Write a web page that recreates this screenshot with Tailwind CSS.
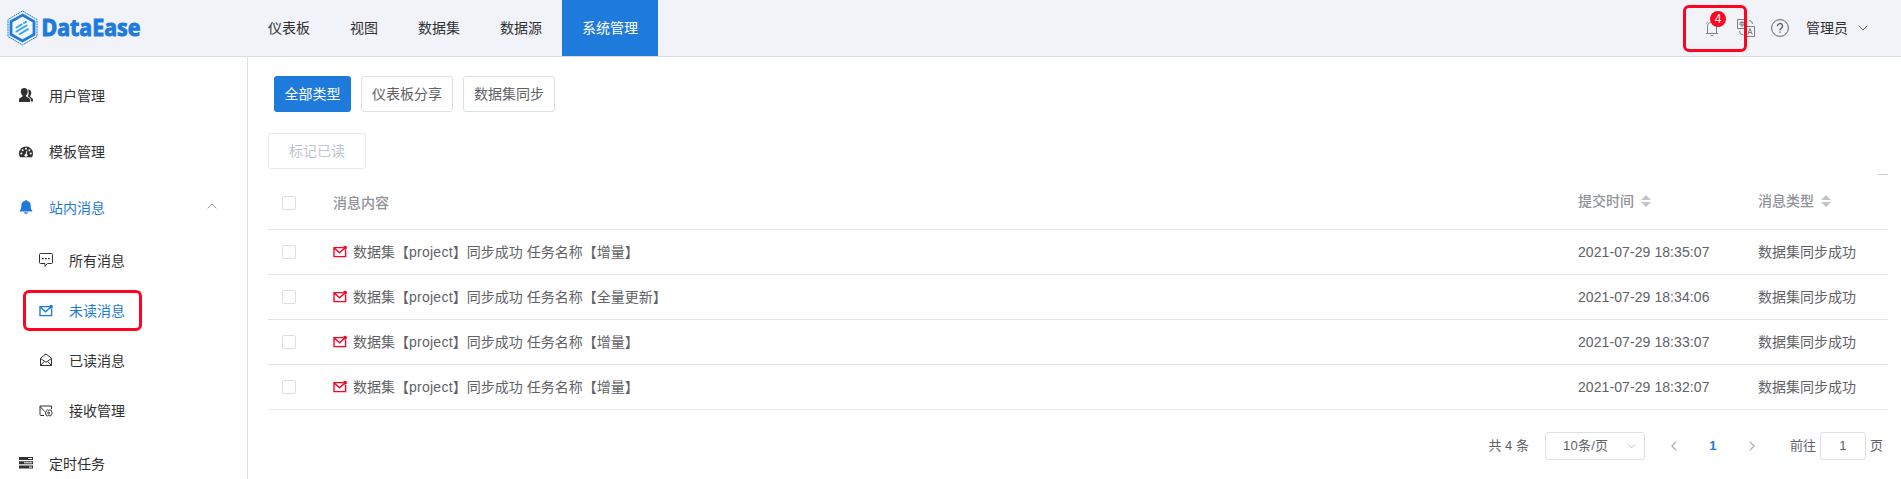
<!DOCTYPE html>
<html lang="zh">
<head>
<meta charset="utf-8">
<title>DataEase</title>
<script src="https://cdn.jsdelivr.net/npm/@tailwindcss/browser@4"></script>
</head>
<body class="h-[479px] w-[1901px] overflow-hidden bg-white font-['Liberation_Sans','Noto_Sans_CJK_SC',sans-serif] text-sm text-[#606266]">
<svg class="hidden">
  <symbol id="unread" viewBox="0 0 14 14"><path d="M10 2.600H1v9h11.600V5M1.200 3l5.400 4.800L11 3.800" fill="none" stroke="currentColor" stroke-width="1.400"/><circle cx="12" cy="2.800" r="2" fill="currentColor"/></symbol>
  <symbol id="sort" viewBox="0 0 10 12"><path d="M0 5 5 0l5 5zM0 7h10l-5 5z" fill="#c0c4cc"/></symbol>
</svg>
<header class="relative flex h-[57px] items-center border-b border-[#d8dce8] bg-[#f1f3f8] text-[#303133]">
  <div class="flex w-[248px] items-center pl-[7px]">
    <svg class="h-[40px] w-[140px] overflow-visible" viewBox="0 -2 140 40">
      <path d="M15.500 1 30 9.500v17L15.500 35 1 26.500v-17z" fill="none" stroke="#1f7bdb" stroke-width="1" stroke-dasharray="2 .6"/>
      <path d="M15.500 5 27 11.500v13L15.500 31 4 24.500v-13z" fill="#f4f8fd" stroke="#1f7bdb" stroke-width="2.800"/>
      <path d="m9.500 17.500 5-3M17 13l2-1.200M9.500 21.500l10-6M13 24l8-4.800" stroke="#35a5ee" stroke-width="2" stroke-linecap="round"/>
      <text x="34.500" y="26" textLength="99" lengthAdjust="spacingAndGlyphs" fill="#1f7bdb" stroke="#1f7bdb" stroke-width="1" class="font-['Noto_Sans'] text-[23px] font-bold">DataEase</text>
    </svg>
  </div>
  <nav class="flex h-full flex-1">
    <a class="flex items-center px-5">仪表板</a><a class="flex items-center px-5">视图</a><a class="flex items-center px-5">数据集</a><a class="flex items-center px-5">数据源</a><a class="flex items-center bg-[#1f7bdb] px-5 text-white">系统管理</a>
  </nav>
  <div class="flex items-center pr-[33px]">
    <div class="relative mr-[18px] h-[18px] w-[14px]">
      <svg class="size-full" viewBox="0 0 14 18" fill="none" stroke="#7d7f84"><path d="M2.500 14.500V7.500a4.500 4.500 0 0 1 9 0v7M1 14.500h12M5.500 16.500h3M1 4.500l1.500-1.300"/></svg>
      <span class="absolute -top-[8px] left-[5px] flex size-4 items-center justify-center rounded-full bg-[#ff0420] text-xs text-white">4</span>
    </div>
    <svg class="mr-[16px] size-[18px]" viewBox="0 0 18 18" fill="none" stroke="#7d7f84"><path d="M8.500 9.500H.5v-9h9v6M8.500 7.500h9v10h-9zM3 3.500h4v2.500H3zM5 2v6M10.800 15.500l2.200-6 2.200 6M11.500 13.500h3M12 1.500q3.500 0 3.500 3.500M2.500 12q0 4 4 4"/></svg>
    <svg class="mr-[17px] size-[18px]" viewBox="0 0 18 18" fill="none" stroke="#606266"><circle cx="9" cy="9" r="8.400"/><path d="M6.500 7.200a2.500 2.500 0 1 1 3.600 2.100q-1.100.6-1.100 1.900M9 12.500v1.300" stroke-width="1.400"/></svg>
    <span>管理员</span>
    <svg class="ml-[10px] h-[6px] w-[10px]" viewBox="0 0 10 6" fill="none" stroke="#606266"><path d="m.7.700 4.300 4.300L9.300.7"/></svg>
  </div>
  <div class="absolute left-[1683px] top-[5px] h-[47px] w-[64px] rounded-[6px] border-3 border-[#ff0420]"></div>
</header>
<div class="flex h-[422px]">
  <aside class="w-[248px] shrink-0 border-r border-[#e0e2e6] pt-[11px] text-[#303133]">
    <div class="flex h-14 items-center gap-4 pl-[19px]">
      <svg class="-mt-[2px] size-[14px]" viewBox="0 0 14 14" fill="currentColor"><path d="M5.200 0C7.400 0 8.700 1.400 8.700 3.600c0 1.700-.7 3-1.600 3.800v1l2.900 1.500q1 .6 1 1.700V14H0v-2.400q0-1.100.8-1.600l2.700-1.600v-1C2.500 6.700 1.800 5.300 1.800 3.600 1.800 1.400 3.100 0 5.200 0z"/><path d="M9.200 1.600c2 0 3.100 1.300 3.100 3.200 0 1.300-.4 2.300-1.100 3v1l2 1.500q.8.600.8 1.600V13.500h-2.200v-2q0-1.200-1-1.800L8.900 8.500q1.500-3.400.3-6.900z"/></svg><span>用户管理</span></div>
    <div class="flex h-14 items-center gap-4 pl-[19px]">
      <svg class="size-[14px]" viewBox="0 0 14 14"><path d="M7 1.500a7 7 0 0 1 7 7q0 2-1 3.800H1Q0 10.500 0 8.500a7 7 0 0 1 7-7z" fill="currentColor"/><g fill="#fff"><circle cx="2.300" cy="8.600" r="1"/><circle cx="3.700" cy="5.200" r="1"/><circle cx="7" cy="3.800" r="1"/><circle cx="10.400" cy="5.200" r="1"/><circle cx="11.700" cy="8.600" r="1"/></g><path d="m7 10 1-4.200" stroke="#fff"/><circle cx="7" cy="10.200" r="1.500" fill="#fff"/></svg><span>模板管理</span></div>
    <div class="flex h-14 items-center gap-4 pl-[19px] text-[#1f7bdb]">
      <svg class="-mt-[2px] size-[14px]" viewBox="0 0 14 14" fill="currentColor"><path d="M7 0q1 0 1.100 1C10.500 1.500 11.700 3.200 11.700 5.500c0 3 .3 4.200 1.600 5v1.100H.7v-1.100c1.300-.8 1.600-2 1.600-5C2.300 3.200 3.500 1.500 5.900 1Q6 0 7 0zM5 12.300h4Q8.700 14 7 14t-2-1.700z"/></svg><span>站内消息</span>
      <svg class="-mt-1 ml-auto mr-[30px] h-[6px] w-[10px]" viewBox="0 0 10 6" fill="none" stroke="#909399"><path d="M.7 5.300 5 1l4.300 4.300"/></svg></div>
    <div class="flex h-[50px] items-center gap-4 pl-[39px]">
      <svg class="-mt-[2px] size-[14px] overflow-visible" viewBox="0 0 14 14" fill="none" stroke="currentColor"><path d="M1.500.5h11q1 0 1 1v8q0 1-1 1H8.500L6 13.300V10.500H1.500q-1 0-1-1v-8q0-1 1-1z"/><path d="M3 5.700h8" stroke-dasharray="1.800 1.200" stroke-width="1.300"/></svg><span>所有消息</span></div>
    <div class="relative flex h-[50px] items-center gap-4 pl-[39px] text-[#1f7bdb]">
      <svg class="-mt-px size-[14px]"><use href="#unread"/></svg><span>未读消息</span>
      <div class="absolute left-[23px] top-[4px] h-[41px] w-[119px] rounded-[6px] border-3 border-[#ff0420]"></div></div>
    <div class="flex h-[50px] items-center gap-4 pl-[39px]">
      <svg class="-mt-[2px] size-[14px]" viewBox="0 0 14 14" fill="none" stroke="currentColor"><path d="M1.500 5.200 7 1l5.500 4.200v7.300h-11zM1.500 5.500 7 9.300l5.500-3.800M1.500 12.500l4-4.200M12.500 12.500l-4-4.200"/></svg><span>已读消息</span></div>
    <div class="flex h-[50px] items-center gap-4 pl-[39px]">
      <svg class="-mt-px size-[14px]" viewBox="0 0 14 14" fill="none" stroke="currentColor"><path d="M5 11.500H2q-1 0-1-1V2h11.500v3M1.200 2.500l4.500 5"/><path d="m7.600 6.500.9-.7 1.200.6 1.200-.6 1.700 1-.1 1.300 1 .8-1 .9.100 1.200-1.700 1-1.200-.7-1.200.7-1.600-1 .1-1.200-1-.9 1-.9z"/><circle cx="9.700" cy="9" r="1"/></svg><span>接收管理</span></div>
    <div class="flex h-14 items-center gap-4 pl-[19px]">
      <svg class="-mt-[2px] size-[14px]" viewBox="0 0 14 14" fill="currentColor"><path d="M0 1h14v3H0zM0 5.300h14v3H0zM0 9.600h14v3H0z"/><path d="M9 2.500h4M5 6.800h8M10 11.100h3" stroke="#fff"/></svg><span>定时任务</span></div>
  </aside>
  <main class="flex-1 pl-5 pr-[13px] pt-[19px]">
    <div class="flex gap-[10px] pl-[6px]">
      <button class="h-9 w-[77px] rounded-[3px] bg-[#1f7bdb] text-white">全部类型</button>
      <button class="h-9 w-[92px] rounded-[3px] border border-[#dcdfe6]">仪表板分享</button>
      <button class="h-9 w-[92px] rounded-[3px] border border-[#dcdfe6]">数据集同步</button>
    </div>
    <button class="mt-[21px] block h-9 w-[98px] rounded-[3px] border border-[#e6eaf4] text-[#c0c4cc]">标记已读</button>
    <div class="mt-[5px] ml-auto h-px w-[10px] bg-[#c8cacd]"></div>
    <div class="grid h-[55px] grid-cols-[65px_1245px_180px_130px] items-center border-b border-[#dfe6ec] font-medium text-[#909399]">
      <span class="mt-[2px] ml-[14px] size-[14px] rounded-[2px] border border-[#dcdfe6]"></span><span class="mt-[2px]">消息内容</span>
      <span class="-mt-[2px] flex items-center gap-[7px]">提交时间<svg class="h-3 w-[10px]"><use href="#sort"/></svg></span>
      <span class="-mt-[2px] flex items-center gap-[7px]">消息类型<svg class="h-3 w-[10px]"><use href="#sort"/></svg></span>
    </div>
    <div class="grid h-[45px] grid-cols-[65px_1245px_180px_130px] items-center border-b border-[#dfe6ec]">
      <span class="ml-[14px] size-[14px] rounded-[2px] border border-[#dcdfe6]"></span><span class="flex items-center gap-[6px]"><svg class="size-[14px] text-[#ff0420]"><use href="#unread"/></svg><span>数据集【<span class="tracking-[.25px]">project</span>】同步成功 任务名称【增量】</span></span><span class="tracking-[.08px]">2021-07-29 18:35:07</span><span>数据集同步成功</span>
    </div>
    <div class="grid h-[45px] grid-cols-[65px_1245px_180px_130px] items-center border-b border-[#dfe6ec]">
      <span class="ml-[14px] size-[14px] rounded-[2px] border border-[#dcdfe6]"></span><span class="flex items-center gap-[6px]"><svg class="size-[14px] text-[#ff0420]"><use href="#unread"/></svg><span>数据集【<span class="tracking-[.25px]">project</span>】同步成功 任务名称【全量更新】</span></span><span class="tracking-[.08px]">2021-07-29 18:34:06</span><span>数据集同步成功</span>
    </div>
    <div class="grid h-[45px] grid-cols-[65px_1245px_180px_130px] items-center border-b border-[#dfe6ec]">
      <span class="ml-[14px] size-[14px] rounded-[2px] border border-[#dcdfe6]"></span><span class="flex items-center gap-[6px]"><svg class="size-[14px] text-[#ff0420]"><use href="#unread"/></svg><span>数据集【<span class="tracking-[.25px]">project</span>】同步成功 任务名称【增量】</span></span><span class="tracking-[.08px]">2021-07-29 18:33:07</span><span>数据集同步成功</span>
    </div>
    <div class="grid h-[45px] grid-cols-[65px_1245px_180px_130px] items-center border-b border-[#e6ebf5]">
      <span class="ml-[14px] size-[14px] rounded-[2px] border border-[#dcdfe6]"></span><span class="flex items-center gap-[6px]"><svg class="size-[14px] text-[#ff0420]"><use href="#unread"/></svg><span>数据集【<span class="tracking-[.25px]">project</span>】同步成功 任务名称【增量】</span></span><span class="tracking-[.08px]">2021-07-29 18:32:07</span><span>数据集同步成功</span>
    </div>
    <div class="mt-[22px] flex h-7 items-center justify-end pr-[5px] text-[13px]">
      <span class="mr-[16px]">共 4 条</span>
      <div class="flex h-7 w-[100px] items-center justify-between rounded-[3px] border border-[#dcdfe6] pl-[17px] pr-[8px]"><span class="tracking-[.25px]">10条/页</span><svg class="h-[6px] w-[9px]" viewBox="0 0 9 6" fill="none" stroke="#c0c4cc"><path d="m.5.800 4 4 4-4"/></svg></div>
      <svg class="ml-[26px] h-[10px] w-[6px]" viewBox="0 0 6 10" fill="none" stroke="#a8abb2" stroke-width="1.200"><path d="M5.200.7.900 5l4.300 4.300"/></svg>
      <span class="w-[72px] text-center font-bold text-[#1f7bdb]">1</span>
      <svg class="h-[10px] w-[6px]" viewBox="0 0 6 10" fill="none" stroke="#a8abb2" stroke-width="1.200"><path d="M.8.700 5.100 5 .8 9.300"/></svg>
      <span class="ml-[35px]">前往</span>
      <span class="ml-[4px] mr-[4px] flex h-7 w-[46px] items-center justify-center rounded-[3px] border border-[#dcdfe6]">1</span>
      <span>页</span>
    </div>
  </main>
</div>
</body>
</html>
